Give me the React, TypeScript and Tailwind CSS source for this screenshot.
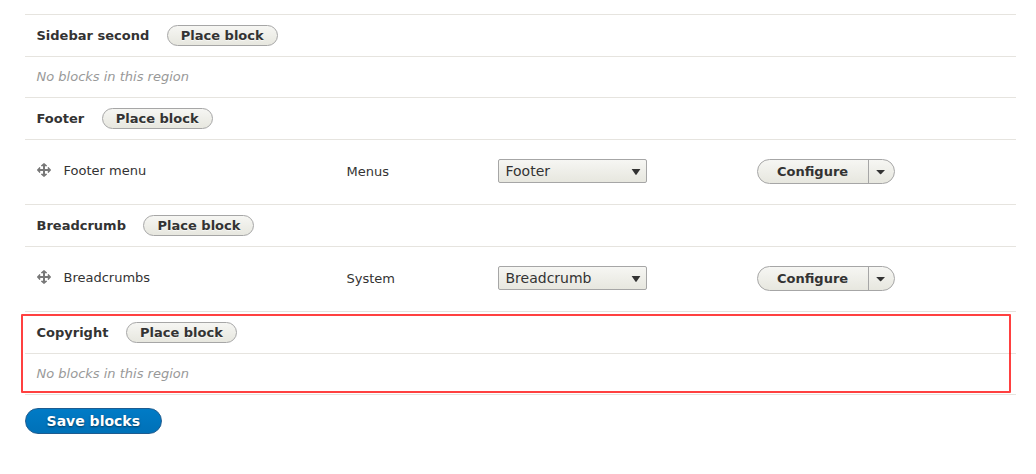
const surface = "border border-[#a6a6a6] bg-linear-to-b from-[#f6f6f3] to-[#e7e7df]";

function RegionHeader({ name }: { name: string }) {
  return (
    <div className="flex h-[42px] items-center gap-[17.5px] border-b border-[#e6e4df] pl-[11.5px] font-bold">
      <h2 className="leading-5">{name}</h2>
      <button className={`flex h-[21px] w-[111px] items-center justify-center rounded-full leading-none [text-shadow:0_1px_rgba(255,255,255,0.6)] ${surface}`}>
        Place block
      </button>
    </div>
  );
}

function EmptyRegion() {
  return (
    <div className="flex h-[41px] items-center border-b border-[#e6e4df] pl-[11.5px] text-[#999] italic">
      No blocks in this region
    </div>
  );
}

function MoveIcon() {
  return (
    <svg width="14" height="14" viewBox="0 0 14 14" fill="#787878" aria-hidden="true">
      <path d="M6.6.2Q7-.2 7.4.2L10 2.6V3.2H8V6H10.8V4H11.4L13.8 6.6Q14.2 7 13.8 7.4L11.4 10H10.8V8H8V10.8H10V11.4L7.4 13.8Q7 14.2 6.6 13.8L4 11.4V10.8H6V8H3.2V10H2.6L.2 7.4Q-.2 7 .2 6.6L2.6 4H3.2V6H6V3.2H4V2.6Z" />
    </svg>
  );
}

function BlockRow({ name, category, region }: { name: string; category: string; region: string }) {
  return (
    <div className="grid h-[65px] grid-cols-[321.5px_151.5px_259px_1fr] border-b border-[#e6e4df]">
      <div className="flex items-start pt-[21px] pl-3">
        <span className="mt-[2px]"><MoveIcon /></span>
        <span className="ml-[12.5px] leading-5">{name}</span>
      </div>
      <div className="pt-[22px] leading-5">{category}</div>
      <div className="pt-[19px]">
        <button className={`flex h-[24px] w-[149px] items-center justify-between rounded-[2px] pr-[5px] pl-[6.5px] text-[14px] leading-none ${surface}`}>
          <span>{region}</span>
          <svg className="mt-[2px]" width="10" height="6" viewBox="0 0 10 6" fill="#333" aria-hidden="true">
            <path d="M.6 0h8.8L5.6 5.6Q5 6.2 4.4 5.6Z" />
          </svg>
        </button>
      </div>
      <div className="pt-[19px]">
        <div className={`flex h-[25px] w-[138px] overflow-hidden rounded-full font-bold ${surface}`}>
          <button className="w-[111px] border-r border-[#a6a6a6] pl-[19px] text-left leading-[23px]">Configure</button>
          <button className="flex flex-1 items-center pl-[7px]" aria-label="List additional actions">
            <svg className="mt-[2px]" width="10" height="5" viewBox="0 0 10 5" fill="#333" aria-hidden="true">
              <path d="M.2 0h8.8L5.2 4Q4.6 4.5 4 4Z" />
            </svg>
          </button>
        </div>
      </div>
    </div>
  );
}

export default function App() {
  return (
    <main className="h-[474px] overflow-hidden bg-white pt-[14px] pr-5 pl-[25px] font-['DejaVu_Sans',sans-serif] text-[13px] text-[#333]">
      <div className="border-t border-[#e6e4df]">
        <RegionHeader name="Sidebar second" />
        <EmptyRegion />
        <RegionHeader name="Footer" />
        <BlockRow name="Footer menu" category="Menus" region="Footer" />
        <RegionHeader name="Breadcrumb" />
        <BlockRow name="Breadcrumbs" category="System" region="Breadcrumb" />
        <section className="relative">
          <RegionHeader name="Copyright" />
          <EmptyRegion />
          <div className="pointer-events-none absolute top-[2px] -left-1 h-[79px] w-[990px] rounded-[1px] border-2 border-[#ff0000]/75" />
        </section>
      </div>
      <button className="mt-[13px] flex h-[26px] w-[137px] items-center justify-center rounded-full border border-[#1e5c90] bg-linear-to-b from-[#007bc6] to-[#0071b8] pr-[0.4px] text-[14px] leading-none font-bold text-white [text-shadow:0_1px_2px_rgba(0,0,0,0.5)]">
        Save blocks
      </button>
    </main>
  );
}
